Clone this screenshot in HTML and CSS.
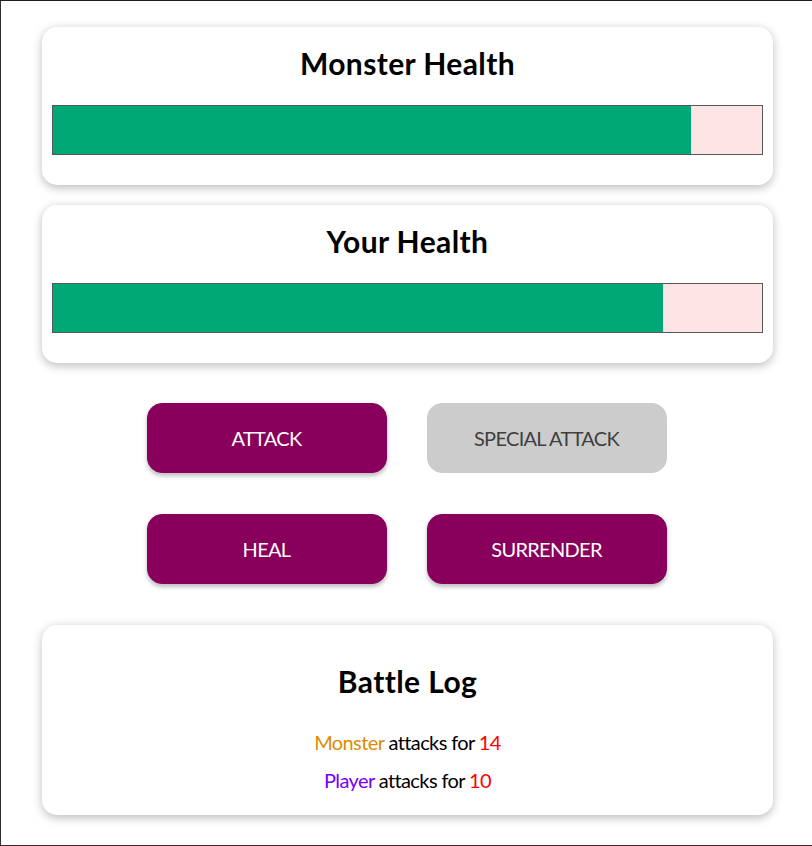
FILE: index.html
```html
<!DOCTYPE html>
<html lang="en">
<head>
<meta charset="utf-8">
<title>Monster Slayer</title>
<link rel="stylesheet" href="styles.css">
</head>
<body>
<div class="frame">
  <section class="container" id="monster">
    <h2>Monster Health</h2>
    <div class="healthbar">
      <div class="healthbar__value" style="width: 90%"></div>
    </div>
  </section>
  <section class="container" id="player">
    <h2>Your Health</h2>
    <div class="healthbar">
      <div class="healthbar__value" style="width: 86%"></div>
    </div>
  </section>
  <section class="controls">
    <button class="btn">ATTACK</button>
    <button class="btn" disabled>SPECIAL ATTACK</button>
    <button class="btn">HEAL</button>
    <button class="btn">SURRENDER</button>
  </section>
  <section class="container log">
    <h2>Battle Log</h2>
    <ul>
      <li><span class="log--monster">Monster</span> attacks for <span class="log--damage">14</span></li>
      <li><span class="log--player">Player</span> attacks for <span class="log--damage">10</span></li>
    </ul>
  </section>
</div>
</body>
</html>
```
FILE: styles.css
```css
* { box-sizing: border-box; }

html, body {
  margin: 0;
  padding: 0;
  background: #fff;
}

body {
  font-family: "Lato", "Open Sans", sans-serif;
  font-size: 20px;
  letter-spacing: -0.6px;
  color: #000;
}

.frame {
  width: 812px;
  height: 846px;
  border-left: 1px solid #2e2e2e;
  border-top: 1px solid #1e1e1e;
  border-bottom: 1px solid #5a1c24;
  padding: 6px 0 0 2px;
  overflow: hidden;
}

.container {
  width: 731px;
  margin: 20px auto;
  padding: 10px;
  text-align: center;
  background: #fff;
  border-radius: 15px;
  box-shadow: 0 2.5px 10px rgba(0, 0, 0, 0.26);
}

.container h2 {
  margin: 5px;
  font-size: 30px;
  line-height: 43px;
  font-weight: 700;
  letter-spacing: 0.4px;
}

.healthbar {
  width: 100%;
  height: 50px;
  margin: 20px 0;
  border: 1px solid #575757;
  background: #fde5e5;
}

.healthbar__value {
  height: 100%;
  background: #00a876;
}

.controls {
  width: 731px;
  margin: 20px auto 21px;
  padding-right: 2px;
  display: flex;
  flex-wrap: wrap;
  justify-content: center;
  row-gap: 1px;
}

.btn {
  font: inherit;
  letter-spacing: -0.7px;
  line-height: 28px;
  width: 240px;
  height: 70px;
  margin: 20px;
  padding: 20px 10px;
  border: 1px solid #88005b;
  border-radius: 15px;
  background: #88005b;
  color: #fff;
  box-shadow: 0 2.5px 4px rgba(0, 0, 0, 0.26);
  cursor: pointer;
}

.btn:disabled {
  background: #ccc;
  border-color: #ccc;
  color: #3f3f3f;
  box-shadow: none;
  cursor: not-allowed;
}

.log {
  padding-bottom: 11px;
}

.log h2 {
  margin: 25px 0;
}

.log ul {
  list-style: none;
  margin: 0;
  padding: 0;
}

.log li {
  margin: 10px 0;
  line-height: 28px;
}

.log--monster { color: #da8d00; }
.log--player { color: #7700ff; }
.log--damage { color: #ff0000; }
```
